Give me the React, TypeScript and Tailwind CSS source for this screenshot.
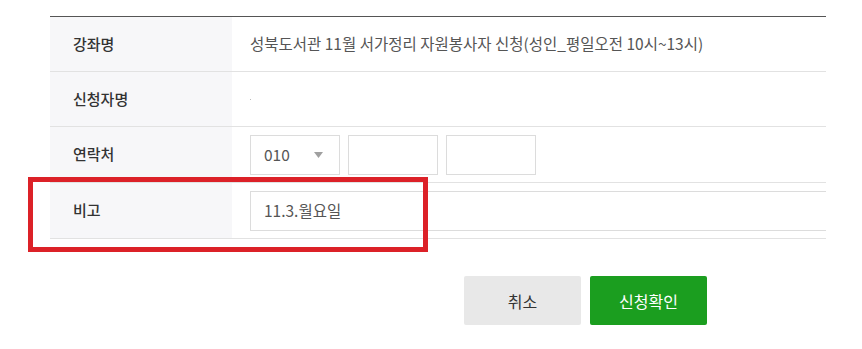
import React from 'react';

const font = { fontFamily: '"Noto Sans CJK KR", "Noto Sans", sans-serif' };

const Row: React.FC<{ label: string; h: string; children?: React.ReactNode }> = ({ label, h, children }) => (
  <div className={`grid grid-cols-[182px_1fr] border-b border-[#e2e2e2] ${h}`}>
    <div className="flex items-center bg-[#f7f7f9] pl-[23px] text-[15px] font-medium text-[#333]">{label}</div>
    <div className="flex items-center pl-[18px] text-[15.5px] text-[#555]">{children}</div>
  </div>
);

const App: React.FC = () => {
  return (
    <div className="relative h-[349px] w-full bg-white" style={font}>
      <div className="ml-[50px] w-[776px] pt-[16px]">
        <div className="border-t border-[#555]">
          <Row label="강좌명" h="h-[55px]">
            성북도서관 11월 서가정리 자원봉사자 신청(성인_평일오전 10시~13시)
          </Row>
          <Row label="신청자명" h="h-[55px]">
            <span className="block h-[1px] w-[1px] bg-[#bbb]" />
          </Row>
          <Row label="연락처" h="h-[56px]">
            <div className="flex gap-[8px]">
              <div className="flex h-[40px] w-[90px] items-center justify-between border border-[#dcdcdc] pl-[13px] pr-[16px] text-[#555]">
                <span>010</span>
                <svg width="9" height="6" viewBox="0 0 9 6">
                  <path d="M0 0 L9 0 L4.5 6 Z" fill="#a0a0a0" />
                </svg>
              </div>
              <div className="h-[40px] w-[90px] border border-[#dcdcdc]" />
              <div className="h-[40px] w-[90px] border border-[#dcdcdc]" />
            </div>
          </Row>
          <Row label="비고" h="h-[56px]">
            <div className="flex h-[40px] w-full items-center border border-r-0 border-[#dcdcdc] pl-[13px] text-[#555]">
              11.3.월요일
            </div>
          </Row>
        </div>
      </div>
      <div className="ml-[464px] mt-[37px] flex gap-[9px]">
        <button className="h-[49px] w-[117px] rounded-[2px] bg-[#e8e8e8] text-[16px] text-[#333]">취소</button>
        <button className="h-[49px] w-[117px] rounded-[2px] bg-[#1b9e1f] text-[16px] text-white">신청확인</button>
      </div>
      <div className="absolute left-[28px] top-[177px] h-[75px] w-[400px] border-[5px] border-[#dc2128]" />
    </div>
  );
};

export default App;
